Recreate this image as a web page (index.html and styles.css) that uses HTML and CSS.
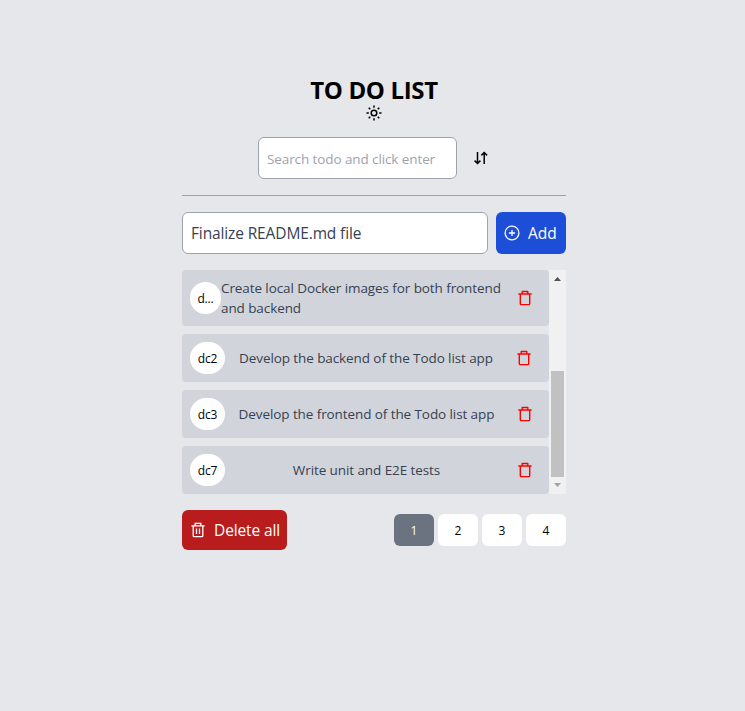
FILE: index.html
```html
<!DOCTYPE html>
<html lang="en">
<head>
<meta charset="utf-8">
<title>To do list</title>
<link rel="stylesheet" href="styles.css">
</head>
<body>
<svg width="0" height="0" class="defs">
  <symbol id="trash" viewBox="0 0 16 16"><path d="M1.4 4H14.6M5.2 3.8V1.5H10.8V3.8M3.3 4.3V13.7Q3.3 14.6 4.2 14.6H11.8Q12.7 14.6 12.7 13.7V4.3" fill="none" stroke="currentColor" stroke-width="1.4" stroke-linejoin="round"/></symbol>
</svg>
<main class="app">
  <header class="head">
    <h1 class="title">TO DO LIST</h1>
    <svg class="sun" viewBox="0 0 16 16"><circle cx="8" cy="8" r="2.8"/><path d="M8 .5V2.8M8 13.2V15.5M.5 8H2.8M13.2 8H15.5M2.7 2.7L4.3 4.3M11.7 11.7L13.3 13.3M2.7 13.3L4.3 11.7M11.7 4.3L13.3 2.7"/></svg>
  </header>
  <div class="search-row">
    <input class="field search" placeholder="Search todo and click enter">
    <svg class="sort" viewBox="0 0 16 16"><path d="M4.5 2V13.2M1.6 10.6L4.5 13.5L7.4 10.6M11.2 14V2.8M8.3 5.4L11.2 2.5L14.1 5.4"/></svg>
  </div>
  <div class="add-row">
    <input class="field entry" value="Finalize README.md file">
    <button class="btn add"><svg class="icon" viewBox="0 0 16 16"><circle cx="8" cy="8" r="6.9"/><path d="M8 4.9V11.1M4.9 8H11.1"/></svg><span>Add</span></button>
  </div>
  <div class="list-wrap">
    <ul class="list">
      <li class="item tall"><span class="tag short">d...</span><span class="text">Create local Docker images for both frontend<br>and backend</span><svg class="trash"><use href="#trash"/></svg></li>
      <li class="item"><span class="tag">dc2</span><span class="text">Develop the backend of the Todo list app</span><svg class="trash shifted"><use href="#trash"/></svg></li>
      <li class="item"><span class="tag">dc3</span><span class="text">Develop the frontend of the Todo list app</span><svg class="trash"><use href="#trash"/></svg></li>
      <li class="item"><span class="tag">dc7</span><span class="text">Write unit and E2E tests</span><svg class="trash"><use href="#trash"/></svg></li>
    </ul>
    <div class="scrollbar">
      <svg class="arrow" viewBox="0 0 17 17"><path d="M5 11L8.5 7L12 11Z" fill="#505050"/></svg>
      <div class="track"><div class="thumb"></div></div>
      <svg class="arrow" viewBox="0 0 17 17"><path d="M5 6L8.5 10L12 6Z" fill="#a3a3a3"/></svg>
    </div>
  </div>
  <footer class="foot">
    <button class="btn delete"><svg class="icon" viewBox="0 0 16 16"><path d="M1.4 3.9H14.6M5.2 3.7V1.4H10.8V3.7M3.2 4.1V13.7Q3.2 14.7 4.2 14.7H11.8Q12.8 14.7 12.8 13.7V4.1M6.5 6.5V12M9.5 6.5V12"/></svg><span>Delete all</span></button>
    <nav class="pages"><button class="page current">1</button><button class="page">2</button><button class="page">3</button><button class="page">4</button></nav>
  </footer>
</main>
</body>
</html>
```

FILE: styles.css
```css
* { box-sizing: border-box; margin: 0; padding: 0; }
body { background: #e5e7eb; color: #000; font-family: "Open Sans", "Noto Sans", sans-serif; font-size: 16px; min-height: 711px; }
button, input { font: inherit; border: 0; }
svg { display: block; flex: none; fill: none; stroke: currentColor; }
.defs { height: 0; }
.app { width: 384px; margin: 0 0 0 182px; padding-top: 78px; }
.head { display: flex; flex-direction: column; align-items: center; height: 59px; }
.title { font-size: 24px; font-weight: 700; line-height: 24px; white-space: nowrap; letter-spacing: -.35px; }
.sun { width: 16px; height: 16px; margin-top: 3px; stroke-width: 1.5; }
.search-row { display: flex; align-items: center; height: 59px; padding: 0 0 17px 76px; border-bottom: 1px solid #9ca3af; }
.field { height: 42px; border: 1px solid #9ca3af; border-radius: 6px; background: #fff; color: #374151; padding: 2px 8px 0; min-width: 0; }
.search { width: 199px; font-size: 13.5px; letter-spacing: -.1px; }
.search::placeholder { color: #9ca3af; opacity: 1; }
.sort { width: 16px; height: 16px; margin-left: 16px; stroke-width: 1.5; }
.add-row { display: flex; gap: 8px; padding-top: 16px; }
.entry { flex: 1; font-size: 15.5px; letter-spacing: -.13px; padding-top: 0; }
.btn { display: flex; align-items: center; color: #fff; border-radius: 6px; padding: 0 8px; gap: 8px; white-space: nowrap; font-size: 15.5px; }
.icon { width: 16px; height: 16px; stroke-width: 1.3; }
.add { width: 70px; height: 42px; background: #1d4ed8; }
.list-wrap { display: flex; height: 224px; margin-top: 16px; }
.list { flex: 1; display: flex; flex-direction: column; gap: 8px; list-style: none; }
.item { display: flex; align-items: center; height: 48px; padding: 0 16px 0 8px; border-radius: 4px; background: #d1d5db; color: #374151; font-size: 13.5px; line-height: 20px; letter-spacing: -.09px; }
.tall { height: 56px; }
.tag { display: flex; align-items: center; justify-content: center; width: 35px; height: 32px; padding-top: 1px; border-radius: 16px; background: #fff; color: #000; font-size: 12px; letter-spacing: -.15px; }
.short { width: 31px; }
.text { flex: 1; padding-right: 9px; text-align: center; white-space: nowrap; }
.tall .text { padding-right: 0; text-align: left; }
.trash { width: 16px; height: 16px; color: #f00; }
.shifted { margin-right: 1px; }
.scrollbar { display: flex; flex-direction: column; width: 17px; background: #f1f1f1; }
.arrow { width: 17px; height: 17px; stroke: none; }
.track { flex: 1; padding: 84px 2px 0; }
.thumb { height: 106px; background: #c1c1c1; }
.foot { display: flex; align-items: center; justify-content: space-between; margin-top: 16px; }
.delete { width: 105px; height: 40px; background: #b91c1c; letter-spacing: -.12px; }
.pages { display: flex; gap: 4px; }
.page { width: 40px; height: 32px; border-radius: 6px; background: #fff; color: #000; font-size: 12px; }
.current { background: #6b7280; color: #fff; }
```
